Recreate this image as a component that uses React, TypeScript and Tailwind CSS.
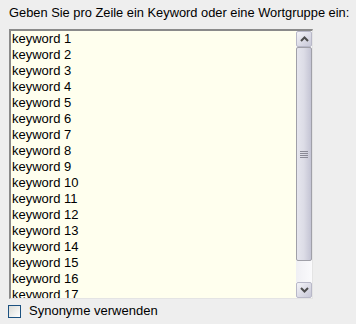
import { useState } from 'react';

const keywords = Array.from({ length: 17 }, (_, i) => `keyword ${i + 1}`);

function ScrollButton({ dir }: { dir: 'up' | 'down' }) {
    return (
        <div className="h-[16px] w-[16px] rounded-[2px] border border-[#b8b8c8] bg-gradient-to-br from-[#f4f4f8] to-[#c8c8d8] flex items-center justify-center">
            <svg width="9" height="6" viewBox="0 0 9 6">
                {dir === 'up' ? (
                    <path d="M1 5 L4.5 1.5 L8 5" fill="none" stroke="#4d4d4d" strokeWidth="2" />
                ) : (
                    <path d="M1 1 L4.5 4.5 L8 1" fill="none" stroke="#4d4d4d" strokeWidth="2" />
                )}
            </svg>
        </div>
    );
}

export default function App() {
    const [checked, setChecked] = useState(false);

    return (
        <div className="w-[356px] h-[324px] bg-[#eeeeee] font-['Liberation_Sans',Arial,sans-serif] text-black overflow-hidden">
            {/* Label */}
            <div className="pt-[5px] pl-[9px] text-[12.85px] leading-[16px] whitespace-nowrap">
                Geben Sie pro Zeile ein Keyword oder eine Wortgruppe ein:
            </div>

            {/* Textarea */}
            <div className="mt-[8px] ml-[9px] w-[304px] h-[270px] flex border-t-2 border-l-2 border-[#8a8a8a] border-r border-b border-r-[#e4e4e4] border-b-[#e4e4e4]">
                <div className="flex-1 bg-[#ffffee] overflow-hidden pl-[1px] text-[13px] leading-[16px]">
                    {keywords.map((k) => (
                        <div key={k} className="whitespace-nowrap">{k}</div>
                    ))}
                </div>
                <div className="w-[16px] bg-[#fdfdfd] flex flex-col">
                    <ScrollButton dir="up" />
                    <div className="flex-1 flex flex-col bg-gradient-to-r from-[#f0f0f4] to-[#fafafc]">
                        <div className="h-[214px] rounded-[2px] border border-[#a0a0a8] bg-gradient-to-r from-[#e6e6ee] via-[#dcdce6] to-[#c4c4d4] flex flex-col items-center justify-center gap-[1px]">
                            <div className="w-[8px] h-[1px] bg-[#8a8a96]" />
                            <div className="w-[8px] h-[1px] bg-[#8a8a96]" />
                            <div className="w-[8px] h-[1px] bg-[#8a8a96]" />
                            <div className="w-[8px] h-[1px] bg-[#8a8a96]" />
                        </div>
                    </div>
                    <ScrollButton dir="down" />
                </div>
            </div>

            {/* Checkbox */}
            <label className="mt-[4px] ml-[8px] flex items-center gap-[8px] text-[13px] leading-[16px] cursor-pointer">
                <span
                    onClick={() => setChecked(!checked)}
                    className="w-[13px] h-[13px] border border-[#1c5180] bg-gradient-to-br from-[#dcdcd7] to-white flex items-center justify-center"
                >
                    {checked && <span className="text-[10px] leading-none text-[#21a121]">✓</span>}
                </span>
                <span>Synonyme verwenden</span>
            </label>
        </div>
    );
}
